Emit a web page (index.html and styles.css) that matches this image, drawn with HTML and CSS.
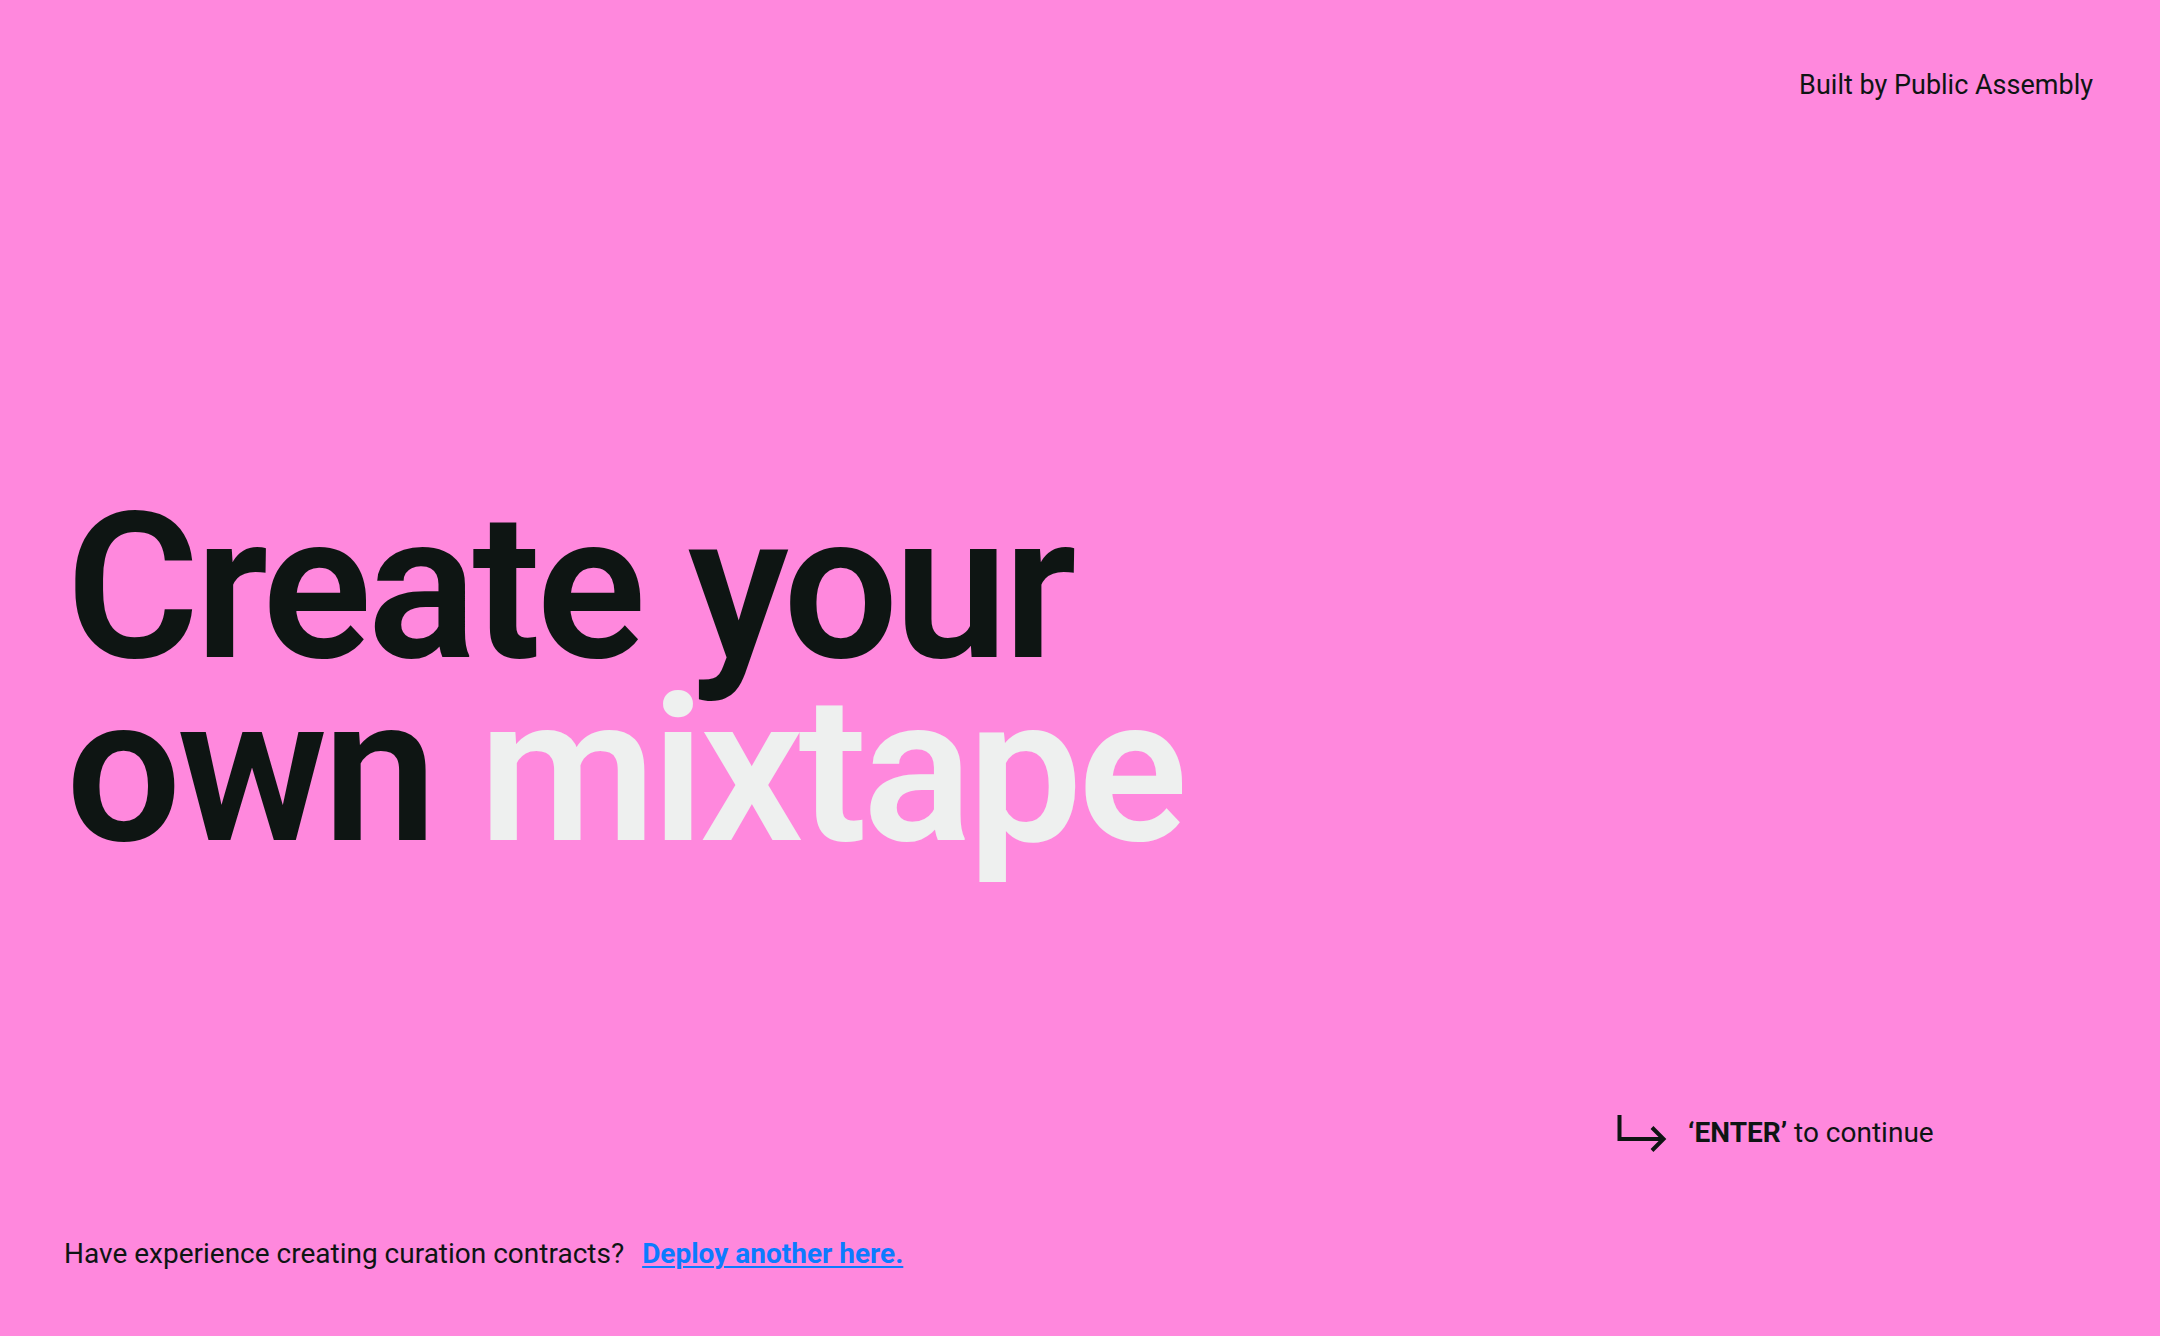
FILE: index.html
```html
<!DOCTYPE html>
<html lang="en">
<head>
<meta charset="utf-8">
<title>Create your own mixtape</title>
<link rel="stylesheet" href="styles.css">
</head>
<body>
<div class="page">
  <header class="top">
    <span class="credit">Built by Public Assembly</span>
  </header>
  <h1 class="title">Create your<br>own <span class="accent">mixtape</span></h1>
  <div class="hint">
    <svg class="hint-icon" width="52" height="44" viewBox="0 0 52 44" aria-hidden="true">
      <path d="M3.5 4V28H48" fill="none" stroke="#0e1513" stroke-width="4" stroke-linejoin="miter"/>
      <path d="M36 16.5L47.5 28L36 39.5" fill="none" stroke="#0e1513" stroke-width="4" stroke-linejoin="miter"/>
    </svg>
    <span class="hint-text"><b>‘ENTER’</b> to continue</span>
  </div>
  <footer class="bottom">
    <span>Have experience creating curation contracts?</span>
    <a class="deploy" href="#">Deploy another here.</a>
  </footer>
</div>
</body>
</html>
```
FILE: styles.css
```css
html, body {
  margin: 0;
  padding: 0;
}
body {
  background: #ff88dd;
  color: #0e1513;
  font-family: Roboto, "Liberation Sans", sans-serif;
}
.page {
  box-sizing: border-box;
  height: 1336px;
  padding: 69px 67px 0 64px;
  display: flex;
  flex-direction: column;
}
.top {
  display: flex;
  justify-content: flex-end;
}
.credit {
  font-size: 27px;
  line-height: 32px;
  font-weight: 400;
}
.hint-text, .bottom {
  font-size: 28px;
  line-height: 32px;
  font-weight: 400;
}
.title {
  margin: 395px 0 0 2px;
  font-size: 204px;
  line-height: 183px;
  font-weight: 600;
  letter-spacing: -4.5px;
  color: #0e1513;
}
.accent {
  color: #eef0ef;
}
.hint {
  margin: 249px 0 0 1552px;
  display: flex;
  align-items: center;
  gap: 20px;
}
.hint-icon {
  display: block;
  flex: none;
}
.hint-text b {
  font-weight: 700;
}
.bottom {
  margin-top: 83px;
  display: flex;
  align-items: baseline;
  gap: 18px;
}
.deploy {
  color: #0b7bff;
  font-weight: 700;
  text-decoration: underline;
  text-decoration-thickness: 2px;
  text-underline-offset: 3px;
}
```
